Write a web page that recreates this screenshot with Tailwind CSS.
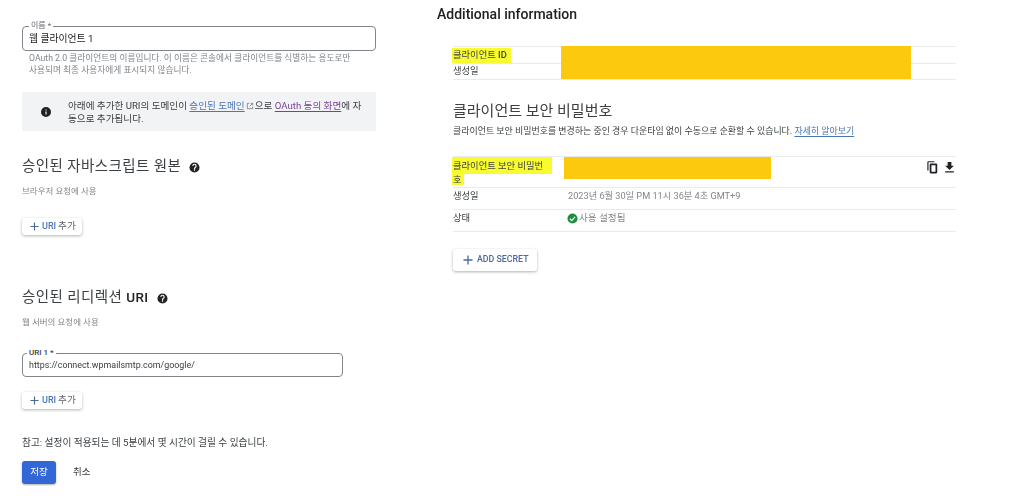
<!DOCTYPE html>
<html lang="ko">
<head>
  <meta charset="UTF-8">
  <title>OAuth client</title>
  <script src="https://cdn.jsdelivr.net/npm/@tailwindcss/browser@4"></script>
</head>
<body class="bg-white w-[1024px] h-[501px] overflow-hidden font-['Roboto','Noto_Sans_CJK_KR',sans-serif] text-[#3c4043]">
  <div class="flex blur-[0.35px]">
    <!-- left: client form -->
    <div class="w-[437px] pl-[22px] shrink-0">
      <div class="relative w-[354px] h-[25px] mt-[26px] border border-[#80868b] rounded-[4px] pl-[6px] flex items-center text-[9.8px] text-[#202124]">
        <span class="absolute left-[6px] -top-[6px] bg-white px-[2px] text-[8px] leading-[10px] text-[#5f6368]">이름 *</span>
        <span class="pt-[1px]">웹 클라이언트 1</span>
      </div>
      <p class="w-[329px] ml-[7px] mt-[1px] text-[8.7px] leading-[12px] text-[#80868b]">OAuth 2.0 클라이언트의 이름입니다. 이 이름은 콘솔에서 클라이언트를 식별하는 용도로만 사용되며 최종 사용자에게 표시되지 않습니다.</p>
      <div class="w-[354px] h-[39px] mt-[16px] bg-[#f1f3f4] flex items-center">
        <svg class="w-[12px] h-[12px] ml-[18px] shrink-0" viewBox="0 0 24 24" fill="#202124"><path d="M12 2a10 10 0 1 0 0 20 10 10 0 0 0 0-20zm1.2 15h-2.4v-6h2.4v6zm0-8h-2.4V6.800h2.400V9z"/></svg>
        <p class="ml-[16px] w-[296px] text-[9.6px] leading-[13px] text-[#3c4043]">아래에 추가한 URI의 도메인이 <span class="text-[#4a76b8] underline underline-offset-2">승인된 도메인</span><svg class="inline w-[8px] h-[8px] mx-[1px] align-[-1px]" viewBox="0 0 24 24" fill="none" stroke="#5f6368" stroke-width="2"><path d="M10 4H4v16h16v-6M14 4h6v6M20 4l-9 9"/></svg>으로 <span class="text-[#7b3f98] underline underline-offset-2">OAuth 동의 화면</span>에 자동으로 추가됩니다.</p>
      </div>
      <div class="flex items-center mt-[25px] h-[22px]">
        <h2 class="text-[14.5px] text-[#3c4043] tracking-[0.4px]">승인된 자바스크립트 원본</h2>
        <svg class="w-[11px] h-[11px] ml-[8px]" viewBox="0 0 24 24" fill="#202124"><path d="M12 1a11 11 0 1 0 0 22 11 11 0 0 0 0-22zm1.300 18h-2.600v-2.600h2.600V19zm2.500-7.600-1.100 1.100c-.9.9-1.400 1.600-1.400 3.200h-2.600v-.6c0-1.300.5-2.500 1.400-3.400l1.500-1.500c.5-.4.7-1 .7-1.700 0-1.300-1-2.300-2.300-2.300S9.700 7.200 9.700 8.500H7.200a4.800 4.800 0 0 1 9.600 0c0 1.100-.4 2.100-1 2.900z"/></svg>
      </div>
      <p class="mt-[7px] text-[8.5px] leading-[12px] text-[#80868b]">브라우저 요청에 사용</p>
      <button class="flex items-center w-[60px] h-[17px] mt-[21px] rounded-[3px] bg-white shadow-[0_1px_3px_rgba(60,64,67,0.4)] pl-[8px] text-[9px] font-medium text-[#4a76b8]">
        <svg class="w-[9px] h-[9px] mr-[3px]" viewBox="0 0 10 10" stroke="#4a6a9c" stroke-width="1.3"><path d="M5 0.500v9M0.500 5h9"/></svg>URI <span class="ml-[2px] text-[9.6px] font-normal text-[#5f6368]">추가</span>
      </button>
      <div class="flex items-center mt-[52px] h-[22px]">
        <h2 class="text-[14.5px] text-[#3c4043] tracking-[0.4px]">승인된 리디렉션 <span class="font-medium text-[#202124] text-[13.5px]">URI</span></h2>
        <svg class="w-[11px] h-[11px] ml-[8px]" viewBox="0 0 24 24" fill="#202124"><path d="M12 1a11 11 0 1 0 0 22 11 11 0 0 0 0-22zm1.300 18h-2.600v-2.600h2.600V19zm2.500-7.600-1.100 1.100c-.9.9-1.400 1.600-1.400 3.200h-2.600v-.6c0-1.300.5-2.500 1.400-3.400l1.500-1.500c.5-.4.7-1 .7-1.700 0-1.300-1-2.300-2.300-2.300S9.700 7.200 9.700 8.500H7.200a4.800 4.800 0 0 1 9.600 0c0 1.100-.4 2.100-1 2.900z"/></svg>
      </div>
      <p class="mt-[7px] text-[8.5px] leading-[12px] text-[#80868b]">웹 서버의 요청에 사용</p>
      <div class="relative w-[321px] h-[24px] mt-[25px] border border-[#80868b] rounded-[4px] pl-[6px] flex items-center text-[8.9px] text-[#3c4043]">
        <span class="absolute left-[4px] -top-[6px] bg-white px-[2px] text-[8px] leading-[10px] font-medium text-[#3c4043]">URI 1 *</span>
        <span class="pt-[1px]">https://connect.wpmailsmtp.com/google/</span>
      </div>
      <button class="flex items-center w-[60px] h-[17px] mt-[15px] rounded-[3px] bg-white shadow-[0_1px_3px_rgba(60,64,67,0.4)] pl-[8px] text-[9px] font-medium text-[#4a76b8]">
        <svg class="w-[9px] h-[9px] mr-[3px]" viewBox="0 0 10 10" stroke="#4a6a9c" stroke-width="1.3"><path d="M5 0.500v9M0.500 5h9"/></svg>URI <span class="ml-[2px] text-[9.6px] font-normal text-[#5f6368]">추가</span>
      </button>
      <p class="mt-[28px] text-[9.7px] leading-[12px] text-[#3c4043]">참고: 설정이 적용되는 데 5분에서 몇 시간이 걸릴 수 있습니다.</p>
      <div class="flex items-center mt-[12px]">
        <button class="w-[34px] h-[23px] rounded-[3px] bg-[#3367d6] text-white text-[9.5px] shadow-[0_1px_2px_rgba(60,64,67,0.4)]">저장</button>
        <span class="ml-[17px] text-[9.5px] text-[#3c4043]">취소</span>
      </div>
    </div>
    <!-- right: additional information -->
    <div class="w-[519px] shrink-0">
      <h1 class="mt-[6px] text-[14px] leading-[17px] font-medium text-[#202124]">Additional information</h1>
      <div class="relative ml-[16px] w-[503px] mt-[23px] text-[9.3px] text-[#3c4043]">
        <div class="h-[17px] border-t border-[#e8eaed] flex items-center"><span class="bg-[#f7fb30] h-[15px] w-[59px] -ml-px pl-px flex items-center whitespace-nowrap">클라이언트&nbsp;<span class="font-medium">ID</span></span></div>
        <div class="h-[17px] border-y border-[#e8eaed] flex items-center pb-[2px]">생성일</div>
        <div class="absolute left-[108px] top-0 w-[350px] h-[33px] bg-[#fdc90f]"></div>
      </div>
      <h2 class="ml-[16px] mt-[21px] text-[15px] leading-[20px] text-[#3c4043]">클라이언트 보안 비밀번호</h2>
      <p class="ml-[16px] mt-[4px] text-[8.95px] leading-[12px] text-[#3c4043]">클라이언트 보안 비밀번호를 변경하는 중인 경우 다운타임 없이 수동으로 순환할 수 있습니다. <span class="text-[#4a76b8] underline underline-offset-2">자세히 알아보기</span></p>
      <div class="ml-[16px] w-[503px] mt-[19px] text-[9.3px] text-[#3c4043]">
        <div class="relative h-[31px] border-t border-[#e8eaed] flex">
          <div class="-ml-px whitespace-nowrap">
            <div class="w-[100px] h-[17px] pl-px pt-[2px] leading-[13px] bg-[#f7fb30]">클라이언트 보안 비밀번</div>
            <div class="w-[12px] h-[11px] pl-px leading-[11px] bg-[#f7fb30]">호</div>
          </div>
          <div class="absolute left-[111px] top-0 w-[207px] h-[22px] bg-[#fdc90f]"></div>
          <div class="ml-auto flex items-start gap-[3px] mt-[3px] -mr-px">
            <svg class="w-[14px] h-[14px]" viewBox="0 0 24 24" fill="#202124"><path d="M16 2H6a2 2 0 0 0-2 2v14h2V4h10V2zm3 4H10a2 2 0 0 0-2 2v13a2 2 0 0 0 2 2h9a2 2 0 0 0 2-2V8a2 2 0 0 0-2-2zm-1 14h-7V9h7v11z"/></svg>
            <svg class="w-[15px] h-[15px]" viewBox="0 0 24 24" fill="#202124"><path d="M19 9h-4V3H9v6H5l7 7 7-7zM5 18v2h14v-2H5z"/></svg>
          </div>
        </div>
        <div class="h-[22px] border-t border-[#e8eaed] flex items-center pb-[5px]">
          <span class="w-[115px]">생성일</span><span class="text-[9.2px] text-[#80868b]">2023년 6월 30일 PM 11시 36분 4초 GMT+9</span>
        </div>
        <div class="h-[23px] border-y border-[#e8eaed] flex items-center pb-[5px]">
          <span class="w-[114px]">상태</span>
          <svg class="w-[11px] h-[11px] mr-[1px]" viewBox="0 0 24 24"><circle cx="12" cy="12" r="11" fill="#1e8e3e"/><path d="M6.500 12.500l4 4 7-8" fill="none" stroke="#fff" stroke-width="2.500"/></svg>
          <span class="text-[9.6px] text-[#80868b]">사용 설정됨</span>
        </div>
      </div>
      <button class="ml-[16px] mt-[17px] flex items-center w-[84px] h-[22px] rounded-[3px] bg-white shadow-[0_1px_3px_rgba(60,64,67,0.4)] pl-[10px] text-[8.8px] font-medium text-[#4a6a9c]">
        <svg class="w-[10px] h-[10px] mr-[4px]" viewBox="0 0 10 10" stroke="#4a6a9c" stroke-width="1.3"><path d="M5 0.500v9M0.500 5h9"/></svg>ADD SECRET
      </button>
    </div>
  </div>
</body>
</html>
